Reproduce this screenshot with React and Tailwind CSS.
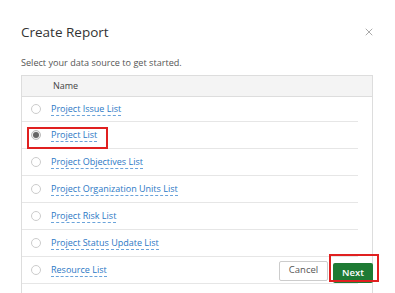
import { X } from "lucide-react";

const sources = [
  "Project Issue List",
  "Project List",
  "Project Objectives List",
  "Project Organization Units List",
  "Project Risk List",
  "Project Status Update List",
  "Resource List",
];

function Row({ label, checked, first }) {
  return (
    <div
      className={`relative flex items-center border-b border-[#e6e6e6] pl-[9px] ${first ? "h-[25px]" : "h-[27px]"}`}
    >
      <span
        className={`w-[10px] h-[10px] rounded-full border flex items-center justify-center ${
          checked ? "border-[#bbb] bg-[#eee]" : "border-[#ccc] bg-white"
        }`}
      >
        {checked && <span className="w-[6px] h-[6px] rounded-full bg-[#666]" />}
      </span>
      <span className="ml-[10px] text-[9px] text-[#2b78c5] border-b border-dashed border-[#6aa3da] leading-[12px]">
        {label}
      </span>
      {checked && (
        <span className="absolute left-[5px] top-[5px] w-[81px] h-[22px] border-2 border-[#e02020]" />
      )}
    </div>
  );
}

export default function App() {
  return (
    <div
      className="relative w-[395px] h-[293px] bg-white overflow-hidden"
      style={{ fontFamily: '"Open Sans", sans-serif' }}
    >
      <div className="flex items-center justify-between pl-[21px] pr-[20px] pt-[20px] h-[44px]">
        <h1 className="text-[13.5px] text-[#333] font-normal">Create Report</h1>
        <X className="w-[12px] h-[12px] text-[#777]" strokeWidth={1.25} />
      </div>
      <p className="pl-[21px] mt-[13px] text-[9.1px] text-[#555] leading-[12px]">
        Select your data source to get started.
      </p>
      <div className="ml-[21px] mt-[6px] w-[352px] border-x border-t border-[#ddd] h-[300px]">
        <div className="h-[21px] bg-[#f4f4f4] border-b border-[#ddd] flex items-center pl-[31px] text-[9px] text-[#444]">
          Name
        </div>
        <div className="w-[336px]">
          {sources.map((s, i) => (
            <Row key={s} label={s} checked={i === 1} first={i === 0} />
          ))}
        </div>
      </div>
      <div className="absolute left-[279px] top-[258px] flex items-center gap-[5px]">
        <button className="w-[49px] h-[20px] border border-[#ccc] rounded-[2px] bg-white text-[9.5px] text-[#555]">
          Cancel
        </button>
        <div className="relative">
          <button className="w-[40px] h-[20px] rounded-[2px] bg-[#1e7a34] text-[9.5px] text-white font-semibold">
            Next
          </button>
          <span className="absolute left-[-4px] top-[-4px] w-[50px] h-[28px] border-2 border-[#e02020]" />
        </div>
      </div>
    </div>
  );
}
